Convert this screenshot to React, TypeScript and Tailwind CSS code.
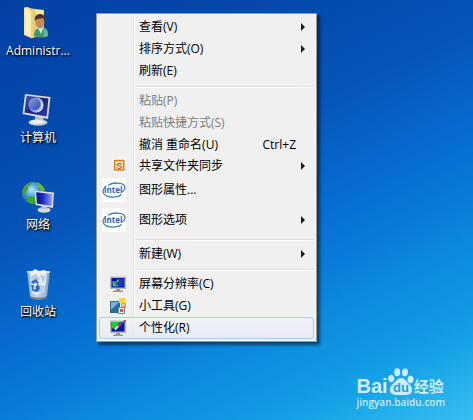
import type { ReactNode } from "react";
import clsx from "clsx";

interface MenuItem {
  label: string;
  icon?: ReactNode;
  shortcut?: string;
  submenu?: boolean;
  disabled?: boolean;
  active?: boolean;
  size?: "compact" | "tall";
}

function FolderIcon() {
  return (
    <svg width="32" height="32" viewBox="0 0 32 32" aria-hidden="true">
      <defs>
        <linearGradient id="folder-front" x1="0" x2="1">
          <stop offset="0" stopColor="#f9e9a5" />
          <stop offset="1" stopColor="#e5c765" />
        </linearGradient>
      </defs>
      <path d="M6 1 22 3v26L9 31z" fill="#e8cf7c" />
      <path d="M9 3h12v24H9z" fill="#f7e7a6" />
      <path d="M2 0.5 6 0l8 5v23l-4 3.5L2 28z" fill="url(#folder-front)" />
      <path d="M4 1v26l5 3V5z" fill="#fff6cc" opacity=".75" />
      <path d="M12 29c0-5 2-8 6-8h4c3 0 4 3 4 8-4 2-10 2-14 0z" fill="#3d9471" />
      <path d="m16 21 3 6 2-6z" fill="#dff0ea" />
      <path d="M21 21c3 0 5 3 5 8l-4 1z" fill="#66b795" />
      <ellipse cx="18" cy="15.500" rx="4.500" ry="6" fill="#c28a5d" />
      <path d="M13 14c-1-5 2-7 5-7s6 2 5 8l-2-4c-3 1-6 0-8 3z" fill="#49352a" />
    </svg>
  );
}

function ComputerIcon() {
  return (
    <svg width="32" height="32" viewBox="0 0 32 32" aria-hidden="true">
      <defs>
        <radialGradient id="moon" cx=".35" cy=".45" r=".6">
          <stop offset="0" stopColor="#3a50c0" />
          <stop offset=".7" stopColor="#7d97e4" />
          <stop offset="1" stopColor="#e4edff" />
        </radialGradient>
        <linearGradient id="screen" x1="0" y1="0" x2="1" y2="1">
          <stop offset="0" stopColor="#4a589f" />
          <stop offset=".5" stopColor="#1b2583" />
          <stop offset="1" stopColor="#2c3aa8" />
        </linearGradient>
        <linearGradient id="moon-core" x1="0" y1="0" x2="1" y2="1">
          <stop offset="0" stopColor="#8fa3ea" />
          <stop offset="1" stopColor="#3044b4" />
        </linearGradient>
      </defs>
      <path d="m13 22 8 1 1 4h-9z" fill="#b9bec2" />
      <ellipse cx="16" cy="28.500" rx="9.500" ry="3.200" fill="#c7cbce" />
      <ellipse cx="15" cy="27.800" rx="7.500" ry="2" fill="#f0f2f2" />
      <path d="M3 0 28.500 3 26 25 0.500 20z" fill="#d7d9d8" />
      <path d="m4.500 1.800 22 2.600L24.500 22.500 2.500 18.600z" fill="url(#screen)" />
      <circle cx="14" cy="11" r="7.500" fill="url(#moon)" />
      <circle cx="12.500" cy="10" r="6" fill="url(#moon-core)" />
    </svg>
  );
}

function NetworkIcon() {
  return (
    <svg width="32" height="32" viewBox="0 0 32 32" aria-hidden="true">
      <defs>
        <radialGradient id="globe" cx=".42" cy=".35" r=".65">
          <stop offset="0" stopColor="#b8ecfa" />
          <stop offset=".5" stopColor="#3b95d2" />
          <stop offset="1" stopColor="#124d9d" />
        </radialGradient>
        <linearGradient id="net-screen" x1="0" x2="1">
          <stop offset="0" stopColor="#0910a0" />
          <stop offset=".4" stopColor="#1c28bd" />
          <stop offset="1" stopColor="#93abf2" />
        </linearGradient>
      </defs>
      <circle cx="11.500" cy="12.500" r="11.500" fill="url(#globe)" />
      <path d="M.5 10c1-5 5-8 9-9l1 2-4 2-1 4-2 3-1 3-2-1z" fill="#4a9e3a" />
      <path d="M15 1.500c4 1 7 4 8 8l-4 1-1-3-3-2z" fill="#65bb2f" />
      <path d="M6 16c4-1 7 0 8 2l-2 5c-4 0-7-2-8-5z" fill="#35a91f" />
      <ellipse cx="22" cy="29" rx="6.500" ry="2.800" fill="#d5d9d7" />
      <path d="m19 24 6-1v5h-5z" fill="#b9bfc0" />
      <path d="M12.500 9.500 32 11.500 31 27 13.500 24z" fill="#dadcd8" />
      <path d="m14.200 11.300 16.200 1.700-.8 11.900-14.700-2.500z" fill="url(#net-screen)" />
    </svg>
  );
}

function RecycleBinIcon() {
  return (
    <svg width="32" height="32" viewBox="0 0 32 32" aria-hidden="true">
      <defs>
        <linearGradient id="bin" x1="0" x2="1">
          <stop offset="0" stopColor="#8fb2d2" />
          <stop offset=".4" stopColor="#dce8f1" />
          <stop offset="1" stopColor="#86a8c6" />
        </linearGradient>
      </defs>
      <path d="M5 3h23l-3 25c-4 3-14 3-17 0z" fill="url(#bin)" opacity=".92" />
      <path d="m8 5 5-4 4 2 6-1 2 4-1 8-2 10-7 3-5-2-1-9z" fill="#e6edf2" />
      <path d="m8 9 6-3 4 5-5 5zM18 7l6 1-3 7zM17 17l6 1-3 7-5-2z" fill="#b9ccdb" />
      <path d="M5 3h23l-.5 2h-22z" fill="#f5f8fa" opacity=".7" />
      <path d="M8 28c4 2 13 2 17 0l-.3 2c-5 2.500-12 2.500-16.400 0z" fill="#76838e" />
      <path d="m10 13 4-2 3 4-2 1-2-2-1 2-3-1zM9 17l3 0-.5 4 3 1v2l-4-1zM16 16l2 4-2 4-3-1 1-3-1-1z" fill="#2f6bce" />
    </svg>
  );
}

function SyncIcon() {
  return (
    <svg width="13" height="13" viewBox="0 0 13 13" aria-hidden="true">
      <path d="M0 0h13v13H0z" fill="#fff" />
      <rect x="1.700" y="1.500" width="9" height="9.500" fill="#ffe9c6" stroke="#e17816" strokeWidth="1.500" />
      <text x="6.200" y="9.500" textAnchor="middle" fontFamily="Liberation Sans, sans-serif" fontSize="9" fontWeight="700" fill="#d4570a">
        S
      </text>
    </svg>
  );
}

function IntelIcon() {
  return (
    <svg width="24" height="24" viewBox="0 0 24 24" aria-hidden="true">
      <path d="M0 0h24v24H0z" fill="#fff" />
      <path
        d="M6 7.200C11 4.300 20 4.200 22.300 7.500c1.400 2.300 0 5-2.300 6.500M4 8.300C-.5 12 .2 16.500 5.500 18.300c5 1.600 11.500.6 14-1.800"
        fill="none"
        stroke="#3b7cbd"
        strokeWidth="1.300"
      />
      <text x="11.200" y="15" textAnchor="middle" fontFamily="Open Sans, sans-serif" fontSize="8" fontWeight="700" fill="#2469b3">
        intel
      </text>
    </svg>
  );
}

function Monitor({ children }: { children: ReactNode }) {
  return (
    <svg width="16" height="16" viewBox="0 0 16 16" aria-hidden="true">
      <path d="M0 0.500h16v12.500H0z" fill="#b9b8b0" />
      <path d="M1.500 2h13v9.500h-13z" fill="#0b16a8" />
      <path d="M6 13h4v1.500h3V16H3v-1.500h3z" fill="#9a9a94" />
      {children}
    </svg>
  );
}

function ResolutionIcon() {
  return (
    <Monitor>
      <path d="M7 4h6.500M8 6.500h5.500M8 9h5.500" stroke="#2b6be8" strokeWidth="1" />
      <path d="M8.500 4 4 8.500M3.500 5v4.500H8" fill="none" stroke="#3ddc3d" strokeWidth="1.600" />
    </Monitor>
  );
}

function GadgetsIcon() {
  return (
    <svg width="16" height="16" viewBox="0 0 16 16" aria-hidden="true">
      <path d="M0 3h10v12H0z" fill="#2c6c9c" />
      <path d="M1 4h8L1 12z" fill="#7fb4d4" />
      <path d="M9 0h6v5H9z" fill="#f9d63d" />
      <path d="M11 5h5v5h-5z" fill="#f29a63" />
      <path d="M12 6h2.500v2.500H12z" fill="#ffc79d" />
      <path d="M8.500 9.500h6v6h-6z" fill="#f4f7fa" stroke="#5e87ae" />
      <path d="M10 11h3v3h-3z" fill="#e2591c" />
    </svg>
  );
}

function PersonalizeIcon() {
  return (
    <Monitor>
      <path d="M1.500 2h8.500L5 9 1.500 8z" fill="#20c92f" />
      <path d="m5 9.500 3.500-3.500" stroke="#f4f4f4" strokeWidth="1.800" />
      <path d="m8 6.500 3-2.500" stroke="#e23b37" strokeWidth="2" />
      <path d="M10.500 4.500 16 0" stroke="#7b3fc0" strokeWidth="1.600" />
    </Monitor>
  );
}

const DESKTOP_ICONS = [
  { label: "Administr...", icon: <FolderIcon /> },
  { label: "计算机", icon: <ComputerIcon /> },
  { label: "网络", icon: <NetworkIcon /> },
  { label: "回收站", icon: <RecycleBinIcon /> },
];

const MENU_GROUPS: MenuItem[][] = [
  [
    { label: "查看(V)", submenu: true },
    { label: "排序方式(O)", submenu: true },
    { label: "刷新(E)" },
  ],
  [
    { label: "粘贴(P)", disabled: true },
    { label: "粘贴快捷方式(S)", disabled: true },
    { label: "撤消 重命名(U)", shortcut: "Ctrl+Z" },
    { label: "共享文件夹同步", icon: <SyncIcon />, submenu: true, size: "compact" },
    { label: "图形属性...", icon: <IntelIcon />, size: "tall" },
    { label: "图形选项", icon: <IntelIcon />, submenu: true, size: "tall" },
  ],
  [{ label: "新建(W)", submenu: true }],
  [
    { label: "屏幕分辨率(C)", icon: <ResolutionIcon /> },
    { label: "小工具(G)", icon: <GadgetsIcon /> },
    { label: "个性化(R)", icon: <PersonalizeIcon />, active: true },
  ],
];

function MenuRow({ item }: { item: MenuItem }) {
  return (
    <button
      role="menuitem"
      disabled={item.disabled}
      className={clsx(
        "flex w-full items-center rounded-[3px] border text-left",
        item.size === "tall" ? "h-[30px]" : item.size === "compact" ? "h-[19px]" : "h-[22px]",
        item.active ? "border-[#aeccf3] bg-linear-to-b from-[#f1f3f7]/80 to-[#e4eaf5]/80" : "border-transparent",
        item.disabled ? "text-[#7d7d7d]" : "text-black"
      )}
    >
      <span className="flex w-[26px] justify-end">{item.icon}</span>
      <span className="ml-[13px] flex-1 whitespace-nowrap">{item.label}</span>
      {item.shortcut && <span className="mr-[17px]">{item.shortcut}</span>}
      {item.submenu && (
        <svg width="4" height="8" viewBox="0 0 4 8" className="mr-2" aria-hidden="true">
          <path d="M0 0v8l4-4z" fill="#1c1c1c" />
        </svg>
      )}
    </button>
  );
}

function ContextMenu() {
  return (
    <div
      role="menu"
      className="flex w-[221px] flex-none border border-[#979797] bg-[#f0f0f0] p-px shadow-[3px_3px_3px_rgba(0,0,0,0.5)] outline outline-offset-[-2px] outline-[#f7f7f7]"
    >
      {/* The gutter line runs behind every row */}
      <div className="relative flex-1 px-px py-px">
        <div className="absolute inset-y-px left-[35px] w-[2px] border-l border-[#e0e0e0] bg-white" />
        <div className="relative">
          {MENU_GROUPS.map((group, i) => (
            <div key={i} role="group">
              {i > 0 && (
                <div className="flex h-2 items-end pb-0.5 pl-9">
                  <div className="h-[2px] w-full border-t border-[#dedede] bg-white" />
                </div>
              )}
              {group.map((item) => (
                <MenuRow key={item.label} item={item} />
              ))}
            </div>
          ))}
        </div>
      </div>
    </div>
  );
}

function Watermark() {
  return (
    <div className="mr-7 mb-3 ml-auto flex flex-col self-end text-[#cdedfc]">
      <div className="flex items-end">
        <span className="font-['Liberation_Sans'] text-[20px] leading-5 font-bold">Bai</span>
        <svg width="26" height="28" viewBox="0 0 26 28" aria-hidden="true">
          <g fill="#cdedfc">
            <ellipse cx="3.200" cy="10.500" rx="3" ry="3.700" transform="rotate(-12 3.200 10.500)" />
            <ellipse cx="9.200" cy="4.200" rx="3" ry="4" />
            <ellipse cx="17" cy="4.400" rx="3" ry="4" transform="rotate(8 17 4.400)" />
            <ellipse cx="22.500" cy="11.500" rx="3" ry="3.700" transform="rotate(10 22.500 11.500)" />
            <path d="M13 10c3 0 4.500 2 6.500 4.500 2.300 2.300 5 4.300 4.500 8-.5 4-4 4.500-6.500 4.500h-9C6 27 2.500 26.500 2 22.500c-.4-3.700 2.200-5.700 4.500-8S10 10 13 10z" />
          </g>
          <text x="13" y="24" textAnchor="middle" fontFamily="Liberation Sans, sans-serif" fontSize="13" fontWeight="700" fill="#1c9fe4">
            du
          </text>
        </svg>
        <span className="font-['Noto_Sans_CJK_SC'] text-[15px] leading-5 font-bold">经验</span>
      </div>
      <span className="text-[10px] leading-3 font-semibold">jingyan.baidu.com</span>
    </div>
  );
}

export default function App() {
  return (
    <main className="flex min-h-screen bg-[linear-gradient(155deg,#0340a4_0%,#0449ad_23%,#0755b9_39%,#066acf_53%,#0a7bd9_65%,#0c8ade_72%,#1198e3_82%,#16a4e8_88%,#36bff0_100%)] font-['Open_Sans','Noto_Sans_CJK_SC',sans-serif] text-[12px] leading-[18px]">
      <ul className="flex w-[76px] flex-none flex-col gap-[34px] pt-[7px]">
        {DESKTOP_ICONS.map(({ label, icon }) => (
          <li key={label}>
            <button className="flex w-full flex-col items-center gap-[3px] text-white [text-shadow:1px_1px_2px_#000,0_1px_2px_#000]">
              {icon}
              <span>{label}</span>
            </button>
          </li>
        ))}
      </ul>
      <div className="mt-[13px] ml-5">
        <ContextMenu />
      </div>
      <Watermark />
    </main>
  );
}
